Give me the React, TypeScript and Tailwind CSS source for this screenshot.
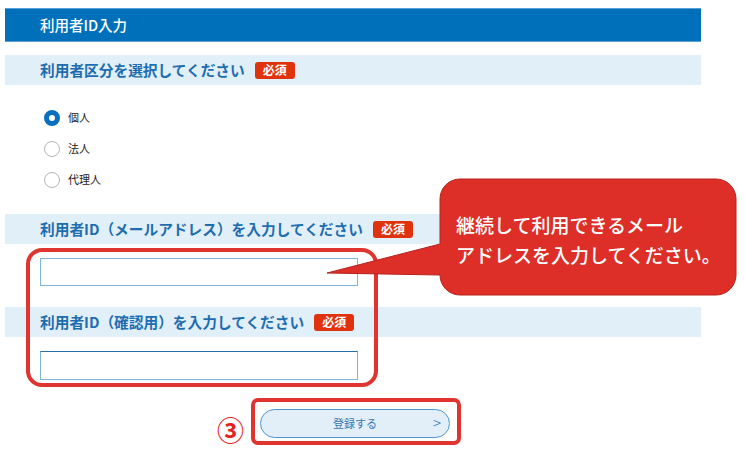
import React from "react";

function Badge() {
  return (
    <span className="ml-[10px] inline-flex h-[17px] w-[40px] items-center justify-center rounded-[3px] bg-[#e0330d] text-[12px] font-bold leading-none text-white">
      必須
    </span>
  );
}

function SectionTitle({ children }: { children: React.ReactNode }) {
  return (
    <div className="flex h-[30px] items-center bg-[#e1eff9] pl-[35px]">
      <span className="text-[14.7px] font-bold leading-none text-[#1d6db0]">{children}</span>
      <Badge />
    </div>
  );
}

function Radio({ label, checked }: { label: string; checked?: boolean }) {
  return (
    <div className="flex h-[31px] items-center">
      {checked ? (
        <span className="box-border h-[16px] w-[16px] rounded-full border-[5px] border-[#0a6fbd] bg-white" />
      ) : (
        <span className="box-border h-[16px] w-[16px] rounded-full border border-[#b5b5b5] bg-white" />
      )}
      <span className="ml-[8px] text-[11px] leading-none text-[#222]">{label}</span>
    </div>
  );
}

export default function App() {
  return (
    <div
      className="relative h-[459px] w-[746px] overflow-hidden bg-white"
      style={{ fontFamily: '"Noto Sans CJK JP", "Noto Sans", sans-serif' }}
    >
      <div className="ml-[5px] w-[696px] pt-[8px]">
        <div className="flex h-[34px] items-center border-y border-[#5aa0d6] bg-[#0070bb] pl-[35px] text-[14.5px] font-medium text-white">
          利用者ID入力
        </div>
        <div className="mt-[13px]">
          <SectionTitle>利用者区分を選択してください</SectionTitle>
        </div>
        <div className="mt-[17px] pl-[39px]">
          <Radio label="個人" checked />
          <Radio label="法人" />
          <Radio label="代理人" />
        </div>
        <div className="mt-[19px]">
          <SectionTitle>利用者ID（メールアドレス）を入力してください</SectionTitle>
        </div>
        <div className="mt-[14px] pl-[35px]">
          <div className="h-[28px] w-[318px] border border-[#7db5de] bg-white" />
        </div>
        <div className="mt-[21px]">
          <SectionTitle>利用者ID（確認用）を入力してください</SectionTitle>
        </div>
        <div className="mt-[14px] pl-[35px]">
          <div className="h-[29px] w-[318px] border border-[#7db5de] border-t-[#2a6ea8] bg-white" />
        </div>
        <div className="mt-[29px] flex justify-center pl-[4px]">
          <div className="relative flex h-[29px] w-[190px] items-center justify-center rounded-full border border-[#4b95d4] bg-[#e2eff9] text-[11px] text-[#3577b3]">
            登録する
            <span className="absolute right-[8px] top-[3px] text-[15px] font-light leading-[20px] text-[#2a6fb3]">&gt;</span>
          </div>
        </div>
      </div>

      {/* red annotation frame around inputs */}
      <div className="pointer-events-none absolute left-[26px] top-[248px] h-[139px] w-[352px] rounded-[16px] border-[4px] border-[#df3430]" />

      {/* button annotation frame */}
      <div className="pointer-events-none absolute left-[251px] top-[398px] h-[47px] w-[210px] rounded-[7px] border-[4px] border-[#df3430]" />

      {/* circled number */}
      <div className="absolute left-[217px] top-[415px] text-[27px] font-bold leading-[30px] text-[#e3231e]">③</div>

      {/* callout */}
      <svg className="pointer-events-none absolute left-0 top-0" width="746" height="459" viewBox="0 0 746 459">
        <path
          d="M460,179 H716 A20,20 0 0 1 736,199 V275 A20,20 0 0 1 716,295 H460 A20,20 0 0 1 440,275 V275 L327,273 L440,244 V199 A20,20 0 0 1 460,179 Z"
          fill="#dd2e27"
          stroke="#b7231f"
          strokeWidth="1"
        />
      </svg>
      <div className="absolute left-[456px] top-[210px] text-[19px] font-medium leading-[30px] text-white">
        <div>継続して利用できるメール</div>
        <div>アドレスを入力してください。</div>
      </div>
    </div>
  );
}
